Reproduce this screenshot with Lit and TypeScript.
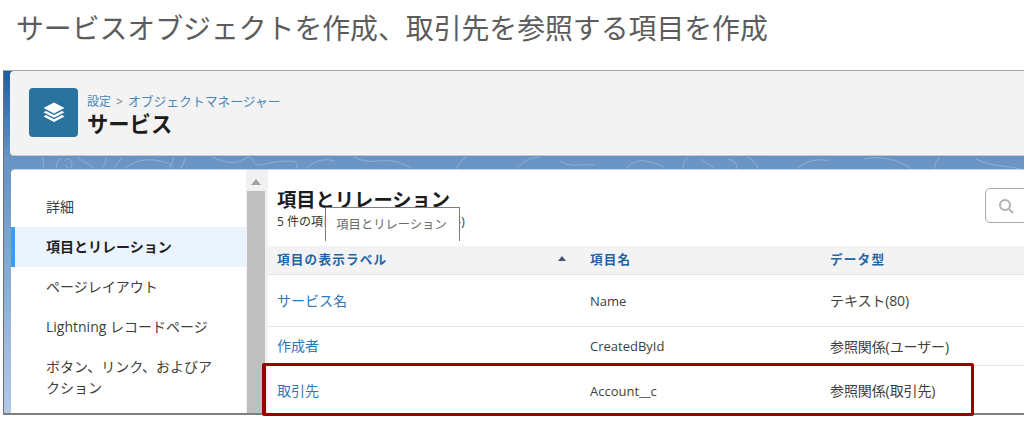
import { LitElement, html, css, svg } from "lit";
import { customElement } from "lit/decorators.js";

const rows = [
  { label: "サービス名", name: "Name", type: "テキスト(80)", cls: "r1" },
  { label: "作成者", name: "CreatedById", type: "参照関係(ユーザー)", cls: "r2" },
  { label: "取引先", name: "Account__c", type: "参照関係(取引先)", cls: "r3" },
];

const contour = svg`<svg class="contour" width="1021" height="100" viewBox="0 0 1021 100" fill="none" stroke="#9dbbdb" stroke-width="1" opacity=".75">
  <path d="M38 100c2-5 2-9 0-14M53 100c-2-6 0-10 4-13M60 90c4-4 8-2 8 3s-5 6-6 1M74 86c4 6 12 6 16 12M96 100c4-4 6-9 6-14M108 100c4-6 8-10 10-14M118 100c8-8 22-14 38-10s14 8 16 10M170 86c-2 6-4 10-6 14M176 100c2-5 4-9 6-14M208 86c14 6 22 8 32 2s8 6 14 6 16-4 30-4 8 4 8 10M300 100c6-8 18-14 30-10M350 86c14 8 26 2 38 4s18 6 22 10M462 86c-8 6-10 10-8 14M510 100c8-8 14-14 26-14M556 90c12 8 22 2 34 4M620 100c4-6 12-12 22-10s16 4 20 10M684 86c-6 6-6 10-2 14M698 88c4 6 12 6 14 12M724 88c8 2 10 6 8 12M744 86c6 4 10 8 10 14M790 100c8-8 22-14 34-10M860 88c20-4 38 2 50 12M936 86c-6 6-6 10-4 14M972 88c14 8 30 6 44 10"/>
</svg>`;

@customElement("app-root")
export class AppRoot extends LitElement {
  static styles = css`
    :host {
      display: block;
      width: 1024px;
      height: 421px;
      overflow: hidden;
      background: #fff;
      font-family: "Open Sans", "Noto Sans CJK JP", sans-serif;
      color: #3e3e3c;
    }
    .page-title {
      margin: 0;
      height: 70px;
      box-sizing: border-box;
      padding: 9px 0 0 16px;
      font-size: 27.85px;
      line-height: 38px;
      font-weight: 400;
      color: #5c5c5c;
      white-space: nowrap;
    }
    .frame {
      position: relative;
      margin-left: 3px;
      height: 345px;
      box-sizing: border-box;
      border-top: 1px solid #a6a6a6;
      border-left: 1px solid #6f6f6f;
      border-bottom: 2px solid #7f7f7f;
      padding: 0 0 0 6px;
      background: linear-gradient(180deg, #1f5fa3 0, #6a95c4 26%, #6a95c4 30%, #b3c9e6 100%);
    }
    .contour { position: absolute; left: 0; top: 0; }
    .head {
      position: relative;
      height: 85px;
      box-sizing: border-box;
      background: #f3f3f3;
      border-radius: 4px 0 0 4px;
      border-bottom: 1px solid #c9c9c9;
      display: flex;
      align-items: center;
      gap: 9px;
      padding: 0 0 2px 19px;
    }
    .tile {
      width: 49px;
      height: 49px;
      border-radius: 4px;
      background: #2a739e;
      display: flex;
      align-items: center;
      justify-content: center;
    }
    .titles { padding-top: 7px; }
    .crumb {
      font-size: 12px;
      line-height: 17px;
      color: #777;
      white-space: nowrap;
    }
    .crumb span { color: #4a86b4; }
    .crumb .sep { color: #777; margin: 0 5px; }
    .crumb .long { font-size: 12.8px; }
    .obj {
      font-size: 21.3px;
      line-height: 28px;
      font-weight: 700;
      color: #1c1c1c;
    }
    .panel {
      position: relative;
      margin: 14px 0 0 1px;
      height: 243px;
      display: flex;
      background: #fff;
      border-radius: 4px 0 0 0;
      box-shadow: 0 -1px 0 #c3d3e5;
    }
    .side {
      width: 235px;
      flex: none;
      padding-top: 16px;
      box-sizing: border-box;
      font-size: 14px;
      color: #3e3e3c;
    }
    .nav {
      height: 40px;
      box-sizing: border-box;
      padding-left: 35px;
      display: flex;
      align-items: center;
    }
    .nav.on {
      font-weight: 700;
      color: #1f1f1f;
      background: #eaf4fe;
      box-shadow: inset 4px 0 0 #3f9bfa;
      margin-top: 1px;
      margin-bottom: -1px;
      padding-bottom: 2px;
    }
    .nav.two {
      height: auto;
      display: block;
      padding: 10px 30px 0 35px;
      line-height: 21px;
    }
    .scroll {
      width: 22px;
      flex: none;
      background: #f1f1f1;
      display: flex;
      flex-direction: column;
      align-items: flex-start;
      padding-left: 1px;
      box-sizing: border-box;
    }
    .arrow {
      margin: 9px 0 6px 4px;
      width: 0;
      height: 0;
      border-left: 5px solid transparent;
      border-right: 5px solid transparent;
      border-bottom: 6px solid #a3a3a3;
    }
    .thumb { width: 18px; flex: 1; background: #bfbfbf; }
    .main { flex: 1; min-width: 0; position: relative; }
    .main-head {
      height: 76px;
      box-sizing: border-box;
      padding: 16px 0 0 9px;
      position: relative;
    }
    .main-head h2 {
      margin: 0;
      font-size: 19.3px;
      line-height: 28px;
      font-weight: 700;
      color: #1c1c1c;
      white-space: nowrap;
    }
    .count { font-size: 12px; line-height: 17px; color: #333; margin-top: -1px; white-space: nowrap; }
    .search {
      position: absolute;
      left: 717px;
      top: 18px;
      width: 60px;
      height: 35px;
      box-sizing: border-box;
      border: 1px solid #a8a8a8;
      border-radius: 5px;
      background: #fff;
      display: flex;
      align-items: center;
      padding-left: 12px;
    }
    .tip {
      position: absolute;
      left: 57px;
      top: 37px;
      width: 135px;
      height: 34px;
      box-sizing: border-box;
      background: #fff;
      border: 1px solid #7d7d7d;
      border-bottom: 0;
      font-size: 12.3px;
      color: #6a6a6a;
      display: flex;
      align-items: center;
      justify-content: center;
      padding: 0 2px 1px 0;
      white-space: nowrap;
    }
    .row {
      display: grid;
      grid-template-columns: 313px 240px 1fr;
      padding-left: 9px;
      align-items: center;
      box-sizing: border-box;
      border-bottom: 1px solid #e6e6e6;
      font-size: 13px;
      color: #3e3e3c;
      white-space: nowrap;
    }
    .row.th {
      height: 29px;
      padding-bottom: 3px;
      background: #f3f3f3;
      font-weight: 700;
      font-size: 12.6px;
      letter-spacing: 1.2px;
      color: #1b65a8;
    }
    .row.r1 { height: 52px; }
    .row.r2 { height: 39px; }
    .row.r3 { height: 47px; padding-top: 2px; border-bottom: 0; }
    .lab { font-size: 14px; color: #2f77b5; margin-bottom: 2px; }
    .lab-h { display: flex; justify-content: space-between; padding-right: 24px; align-items: center; }
    .sort {
      width: 0;
      height: 0;
      border-left: 4px solid transparent;
      border-right: 4px solid transparent;
      border-bottom: 5px solid #44546a;
    }
    .type { font-size: 14px; letter-spacing: -0.1px; margin-bottom: 1px; }
    .mark {
      position: absolute;
      left: -6px;
      top: 193px;
      width: 712px;
      height: 53px;
      box-sizing: border-box;
      border: solid #990000;
      border-width: 3px 3px 3px 4px;
      border-radius: 2px;
      pointer-events: none;
    }
  `;

  render() {
    return html`
      <h1 class="page-title">サービスオブジェクトを作成、取引先を参照する項目を作成</h1>
      <div class="frame">
        ${contour}
        <div class="head">
          <div class="tile">
            <svg width="22" height="22" viewBox="0 0 22 22" fill="#fff">
              <path d="M11 1.5 21.5 7 11 12.5.5 7z"/>
              <path d="M3 9.9 11 14l8-4.1 2.5 1.3L11 16.7.5 11.2z"/>
              <path d="M3 14.1 11 18.2l8-4.1 2.5 1.3L11 20.9.5 15.4z"/>
            </svg>
          </div>
          <div class="titles">
            <div class="crumb"><span>設定</span><span class="sep">&gt;</span><span class="long">オブジェクトマネージャー</span></div>
            <div class="obj">サービス</div>
          </div>
        </div>
        <div class="panel">
          <div class="side">
            <div class="nav">詳細</div>
            <div class="nav on">項目とリレーション</div>
            <div class="nav">ページレイアウト</div>
            <div class="nav">Lightning レコードページ</div>
            <div class="nav two">ボタン、リンク、およびアクション</div>
          </div>
          <div class="scroll"><div class="arrow"></div><div class="thumb"></div></div>
          <div class="main">
            <div class="main-head">
              <h2>項目とリレーション</h2>
              <div class="count">5 件の項目、並び替え基準: ラベル)</div>
              <div class="search">
                <svg width="16" height="16" viewBox="0 0 16 16" fill="none" stroke="#b0b0b0" stroke-width="2">
                  <circle cx="7" cy="7" r="5"/><path d="m11 11 4 4"/>
                </svg>
              </div>
              <div class="tip">項目とリレーション</div>
            </div>
            <div class="row th">
              <div class="lab-h"><span>項目の表示ラベル</span><span class="sort"></span></div>
              <div>項目名</div>
              <div>データ型</div>
            </div>
            ${rows.map(
              (r) => html`<div class="row ${r.cls}">
                <div class="lab">${r.label}</div>
                <div>${r.name}</div>
                <div class="type">${r.type}</div>
              </div>`
            )}
            <div class="mark"></div>
          </div>
        </div>
      </div>
    `;
  }
}
